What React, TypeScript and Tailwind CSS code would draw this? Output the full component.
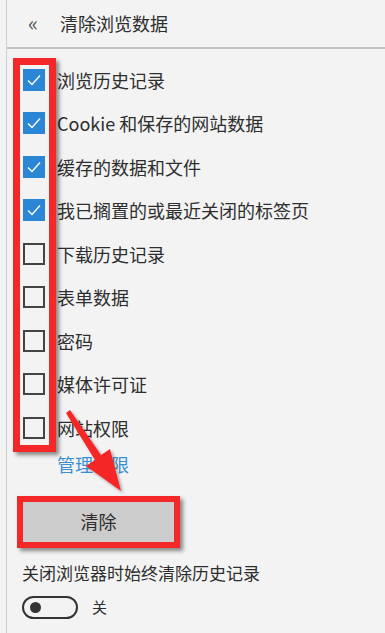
import React from 'react';

const items = [
  { label: '浏览历史记录', checked: true },
  { label: 'Cookie 和保存的网站数据', checked: true },
  { label: '缓存的数据和文件', checked: true },
  { label: '我已搁置的或最近关闭的标签页', checked: true },
  { label: '下载历史记录', checked: false },
  { label: '表单数据', checked: false },
  { label: '密码', checked: false },
  { label: '媒体许可证', checked: false },
  { label: '网站权限', checked: false },
];

const font = { fontFamily: '"Noto Sans CJK SC", "Noto Sans", sans-serif' };

function Checkbox({ checked }: { checked: boolean }) {
  if (checked) {
    return (
      <span className="flex h-[22px] w-[22px] shrink-0 items-center justify-center bg-[#2b86d6]">
        <svg width="16" height="16" viewBox="0 0 16 16" fill="none">
          <path d="M2 8.5l4 4 8-9" stroke="#ffffff" strokeWidth="1.4" />
        </svg>
      </span>
    );
  }
  return <span className="block h-[22px] w-[22px] shrink-0 border-2 border-[#444444]" />;
}

export default function App() {
  return (
    <div className="relative h-[633px] w-[385px] overflow-hidden bg-[#f3f3f3] pl-[6px] text-[#2e2e2e]" style={font}>
      <div className="flex h-full flex-col border-l border-[#cfcfcf]">
        {/* Header */}
        <div className="flex h-[49px] items-center border-b-2 border-[#c4c4c4] pb-[2px]">
          <span className="ml-[21px] text-[21px] leading-none text-[#555555]">«</span>
          <span className="ml-[22px] text-[18px] leading-none">清除浏览数据</span>
        </div>

        {/* Options */}
        <div className="mt-[9px] flex flex-col">
          {items.map((item) => (
            <div key={item.label} className="flex h-[43.5px] items-center pl-[16px]">
              <Checkbox checked={item.checked} />
              <span className="ml-[12px] text-[18px] leading-none">{item.label}</span>
            </div>
          ))}
          <div className="flex h-[29px] items-center pl-[50px] text-[18px] text-[#3b8ed2]">管理权限</div>
        </div>

        {/* Clear button with annotation frame */}
        <div className="ml-[10px] mt-[17px] w-[163px] border-[6px] border-[#f42828] shadow-[3px_3px_4px_rgba(0,0,0,0.45)]">
          <div className="flex h-[40px] items-center justify-center bg-[#cccccc] text-[18px]">清除</div>
        </div>

        <div className="ml-[15px] mt-[16px] text-[17px] leading-none">关闭浏览器时始终清除历史记录</div>

        <div className="ml-[15px] mt-[15px] flex items-center">
          <span className="flex h-[23px] w-[56px] items-center rounded-full border-2 border-[#333333] pl-[6px]">
            <span className="block h-[11px] w-[11px] rounded-full bg-[#333333]" />
          </span>
          <span className="ml-[14px] text-[15px]">关</span>
        </div>
      </div>

      {/* Annotation: red frame around checkboxes */}
      <div className="pointer-events-none absolute left-[13px] top-[58px] h-[394px] w-[43px] border-[7px] border-[#f42828] shadow-[3px_3px_4px_rgba(0,0,0,0.45)]" />

      {/* Annotation: arrow */}
      <svg className="pointer-events-none absolute left-0 top-0" width="385" height="633" viewBox="0 0 385 633">
        <defs>
          <filter id="sh" x="-20%" y="-20%" width="140%" height="140%">
            <feDropShadow dx="2" dy="2" stdDeviation="1.5" floodColor="#000" floodOpacity="0.35" />
          </filter>
        </defs>
        <path d="M66 413 L70 410 L101 455 L110 449 L121 491 L86 466 L95 460 Z" fill="#f42828" filter="url(#sh)" />
      </svg>
    </div>
  );
}
